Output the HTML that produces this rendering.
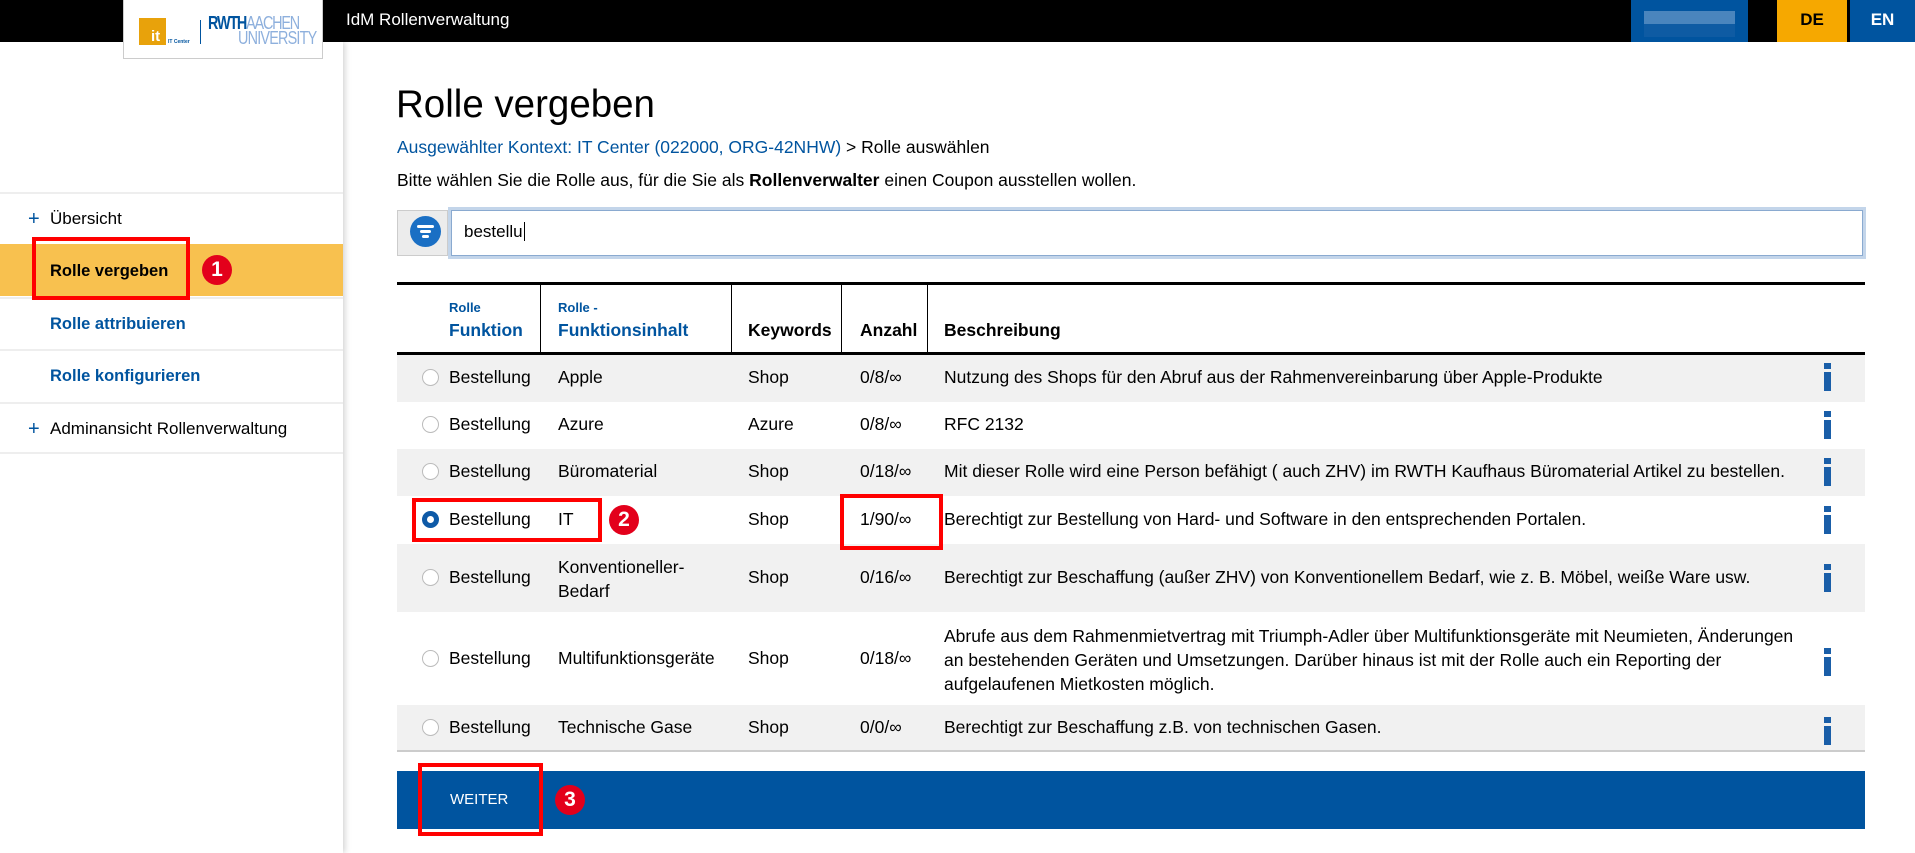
<!DOCTYPE html>
<html><head><meta charset="utf-8">
<style>
*{margin:0;padding:0;box-sizing:border-box}
body{width:1915px;height:853px;overflow:hidden;background:#fff;font-family:"Liberation Sans",Arial,sans-serif;color:#000;position:relative}
.abs{position:absolute}
.hdr{left:0;top:0;width:1915px;height:42px;background:#000}
.side{left:0;top:42px;width:343px;height:811px;background:#fff;box-shadow:2px 0 6px rgba(0,0,0,.18)}
.item{position:absolute;left:0;width:343px;height:52px;border-top:2px solid #eee;font-size:17px;line-height:50px}
.badge{position:absolute;width:30px;height:30px;border-radius:50%;background:#e3001b;color:#fff;font-weight:bold;font-size:21px;text-align:center;line-height:30px}
.red{position:absolute;border:4px solid #f00}
.row{position:absolute;left:397px;width:1468px}
.row div{position:absolute;font-size:17.5px}
.radio{width:17px;height:17px;border-radius:50%;border:1px solid #bbb;background:#fff}
.info{position:absolute;left:1824px;width:7px}
</style></head><body>
<div class="abs hdr"></div>
<div class="abs side"></div>
<div class="abs" style="left:123px;top:0;width:200px;height:59px;background:#fff;border:1px solid #ccc;border-top:none"></div>
<div class="abs" style="left:139px;top:18px;width:27px;height:27px;background:#e8a20b"></div>
<div class="abs" style="left:151px;top:28px;color:#fff;font-size:15px;font-weight:bold">it</div>
<div class="abs" style="left:168px;top:39px;font-size:5px;color:#00549f;font-weight:bold">IT Center</div>
<div class="abs" style="left:200px;top:20px;width:1px;height:24px;background:#00549f"></div>
<div class="abs" style="left:208px;top:14px;font-size:18px;font-weight:bold;letter-spacing:-1.5px;color:#00549f;transform:scaleX(.8);transform-origin:left;line-height:18px">RWTH<span style="color:#8eb0dd;font-weight:normal">AACHEN</span></div>
<div class="abs" style="left:238px;top:29px;font-size:18px;letter-spacing:-1px;color:#8eb0dd;transform:scaleX(.8);transform-origin:left;line-height:18px">UNIVERSITY</div>
<div class="abs" style="left:346px;top:10px;color:#fff;font-size:17px">IdM Rollenverwaltung</div>
<div class="abs" style="left:1631px;top:0;width:117px;height:42px;background:#00549f"></div>
<div class="abs" style="left:1644px;top:11px;width:91px;height:13px;background:#4a85bd"></div>
<div class="abs" style="left:1644px;top:24px;width:91px;height:13px;background:#0e5ba3"></div>
<div class="abs" style="left:1777px;top:0;width:70px;height:42px;background:#f6a800;font-weight:bold;font-size:17px;text-align:center;line-height:40px">DE</div>
<div class="abs" style="left:1850px;top:0;width:65px;height:42px;background:#00549f;color:#fff;font-weight:bold;font-size:17px;text-align:center;line-height:40px">EN</div>

<div class="item" style="top:192px"><span style="position:absolute;left:28px;color:#00549f;font-size:20px">+</span><span style="position:absolute;left:50px">Übersicht</span></div>
<div class="item" style="top:244px;background:#f8c14f;border-top-color:#f8c14f"><span style="position:absolute;left:50px;font-weight:bold;font-size:16.5px">Rolle vergeben</span></div>
<div class="item" style="top:297px"><span style="position:absolute;left:50px;font-weight:bold;color:#00549f;font-size:16.5px">Rolle attribuieren</span></div>
<div class="item" style="top:349px"><span style="position:absolute;left:50px;font-weight:bold;color:#00549f;font-size:16.5px">Rolle konfigurieren</span></div>
<div class="item" style="top:402px;border-bottom:2px solid #eee"><span style="position:absolute;left:28px;color:#00549f;font-size:20px">+</span><span style="position:absolute;left:50px">Adminansicht Rollenverwaltung</span></div>
<div class="red" style="left:32px;top:237px;width:158px;height:63px"></div>
<div class="badge" style="left:202px;top:255px">1</div>

<div class="abs" style="left:396px;top:83px;font-size:38.5px">Rolle vergeben</div>
<div class="abs" style="left:397px;top:137px;font-size:17.5px"><span style="color:#00549f">Ausgewählter Kontext: IT Center (022000, ORG-42NHW)</span> &gt; Rolle auswählen</div>
<div class="abs" style="left:397px;top:170px;font-size:17.5px">Bitte wählen Sie die Rolle aus, für die Sie als <b>Rollenverwalter</b> einen Coupon ausstellen wollen.</div>
<div class="abs" style="left:397px;top:210px;width:51px;height:46px;background:#ececec;border:1px solid #ccc"></div>
<div class="abs" style="left:410px;top:216px;width:31px;height:31px;border-radius:50%;background:#1a6fc4"></div>
<div class="abs" style="left:417px;top:225px;width:17px;height:3px;background:#fff;border-radius:2px"></div>
<div class="abs" style="left:420px;top:230px;width:11px;height:3px;background:#fff;border-radius:2px"></div>
<div class="abs" style="left:422px;top:235px;width:7px;height:3px;background:#fff;border-radius:2px"></div>
<div class="abs" style="left:448px;top:207px;width:1418px;height:52px;border:3px solid #c3d5ea"></div>
<div class="abs" style="left:451px;top:210px;width:1412px;height:46px;border:1px solid #8aaad0;background:#fff"></div>
<div class="abs" style="left:464px;top:222px;font-size:17px">bestellu<span style="border-left:1px solid #000;margin-left:1px"></span></div>

<div class="abs" style="left:397px;top:282px;width:1468px;height:3px;background:#000"></div>
<div class="abs" style="left:397px;top:352px;width:1468px;height:3px;background:#000"></div>
<div class="abs" style="left:540px;top:285px;width:1px;height:67px;background:#000"></div>
<div class="abs" style="left:731px;top:285px;width:1px;height:67px;background:#000"></div>
<div class="abs" style="left:841px;top:285px;width:1px;height:67px;background:#000"></div>
<div class="abs" style="left:927px;top:285px;width:1px;height:67px;background:#000"></div>
<div class="abs" style="left:449px;top:300px;font-size:13px;color:#00549f;font-weight:bold">Rolle</div>
<div class="abs" style="left:449px;top:320px;font-size:17.5px;color:#00549f;font-weight:bold">Funktion</div>
<div class="abs" style="left:558px;top:300px;font-size:13px;color:#00549f;font-weight:bold">Rolle -</div>
<div class="abs" style="left:558px;top:320px;font-size:17.5px;color:#00549f;font-weight:bold">Funktionsinhalt</div>
<div class="abs" style="left:748px;top:320px;font-size:17.5px;font-weight:bold">Keywords</div>
<div class="abs" style="left:860px;top:320px;font-size:17.5px;font-weight:bold">Anzahl</div>
<div class="abs" style="left:944px;top:320px;font-size:17.5px;font-weight:bold">Beschreibung</div>

<div class="row" style="top:355px;height:47px;background:#f1f1f1"><div class="radio" style="left:25px;top:14px"></div><div style="left:52px;top:12px">Bestellung</div><div style="left:161px;top:12px">Apple</div><div style="left:351px;top:12px">Shop</div><div style="left:463px;top:12px">0/8/∞</div><div style="left:547px;top:12px">Nutzung des Shops für den Abruf aus der Rahmenvereinbarung über Apple-Produkte</div></div>
<div class="row" style="top:403px;height:45px;background:#fff"><div class="radio" style="left:25px;top:13px"></div><div style="left:52px;top:11px">Bestellung</div><div style="left:161px;top:11px">Azure</div><div style="left:351px;top:11px">Azure</div><div style="left:463px;top:11px">0/8/∞</div><div style="left:547px;top:11px">RFC 2132</div></div>
<div class="row" style="top:449px;height:47px;background:#f1f1f1"><div class="radio" style="left:25px;top:14px"></div><div style="left:52px;top:12px">Bestellung</div><div style="left:161px;top:12px">Büromaterial</div><div style="left:351px;top:12px">Shop</div><div style="left:463px;top:12px">0/18/∞</div><div style="left:547px;top:12px">Mit dieser Rolle wird eine Person befähigt ( auch ZHV) im RWTH Kaufhaus Büromaterial Artikel zu bestellen.</div></div>
<div class="row" style="top:497px;height:46px;background:#fff"><div class="radio" style="left:25px;top:14px;border:5px solid #0e5aa7"></div><div style="left:52px;top:12px">Bestellung</div><div style="left:161px;top:12px">IT</div><div style="left:351px;top:12px">Shop</div><div style="left:463px;top:12px">1/90/∞</div><div style="left:547px;top:12px">Berechtigt zur Bestellung von Hard- und Software in den entsprechenden Portalen.</div></div>
<div class="row" style="top:544px;height:68px;background:#f1f1f1"><div class="radio" style="left:25px;top:25px"></div><div style="left:52px;top:23px">Bestellung</div><div style="left:161px;top:11px;line-height:24px">Konventioneller-<br>Bedarf</div><div style="left:351px;top:23px">Shop</div><div style="left:463px;top:23px">0/16/∞</div><div style="left:547px;top:23px">Berechtigt zur Beschaffung (außer ZHV) von Konventionellem Bedarf, wie z. B. Möbel, weiße Ware usw.</div></div>
<div class="row" style="top:613px;height:91px;background:#fff"><div class="radio" style="left:25px;top:37px"></div><div style="left:52px;top:35px">Bestellung</div><div style="left:161px;top:35px">Multifunktionsgeräte</div><div style="left:351px;top:35px">Shop</div><div style="left:463px;top:35px">0/18/∞</div><div style="left:547px;top:11px;line-height:24px;white-space:nowrap">Abrufe aus dem Rahmenmietvertrag mit Triumph-Adler über Multifunktionsgeräte mit Neumieten, Änderungen<br>an bestehenden Geräten und Umsetzungen. Darüber hinaus ist mit der Rolle auch ein Reporting der<br>aufgelaufenen Mietkosten möglich.</div></div>
<div class="row" style="top:705px;height:47px;background:#f1f1f1;border-bottom:2px solid #ccc"><div class="radio" style="left:25px;top:14px"></div><div style="left:52px;top:12px">Bestellung</div><div style="left:161px;top:12px">Technische Gase</div><div style="left:351px;top:12px">Shop</div><div style="left:463px;top:12px">0/0/∞</div><div style="left:547px;top:12px">Berechtigt zur Beschaffung z.B. von technischen Gasen.</div></div>

<div class="info" style="top:363px;height:6px;background:#1a5ea8"></div><div class="info" style="top:372px;height:19px;background:#1a5ea8"></div>
<div class="info" style="top:411px;height:6px;background:#1a5ea8"></div><div class="info" style="top:420px;height:19px;background:#1a5ea8"></div>
<div class="info" style="top:458px;height:6px;background:#1a5ea8"></div><div class="info" style="top:467px;height:19px;background:#1a5ea8"></div>
<div class="info" style="top:506px;height:6px;background:#1a5ea8"></div><div class="info" style="top:515px;height:19px;background:#1a5ea8"></div>
<div class="info" style="top:564px;height:6px;background:#1a5ea8"></div><div class="info" style="top:573px;height:19px;background:#1a5ea8"></div>
<div class="info" style="top:648px;height:6px;background:#1a5ea8"></div><div class="info" style="top:657px;height:19px;background:#1a5ea8"></div>
<div class="info" style="top:717px;height:6px;background:#1a5ea8"></div><div class="info" style="top:726px;height:19px;background:#1a5ea8"></div>

<div class="red" style="left:412px;top:498px;width:190px;height:44px"></div>
<div class="badge" style="left:609px;top:505px">2</div>
<div class="red" style="left:840px;top:494px;width:103px;height:56px"></div>

<div class="abs" style="left:397px;top:771px;width:1468px;height:58px;background:#00549f"></div>
<div class="abs" style="left:450px;top:791px;color:#fff;font-size:15px">WEITER</div>
<div class="red" style="left:418px;top:763px;width:125px;height:73px"></div>
<div class="badge" style="left:555px;top:785px">3</div>
</body></html>
